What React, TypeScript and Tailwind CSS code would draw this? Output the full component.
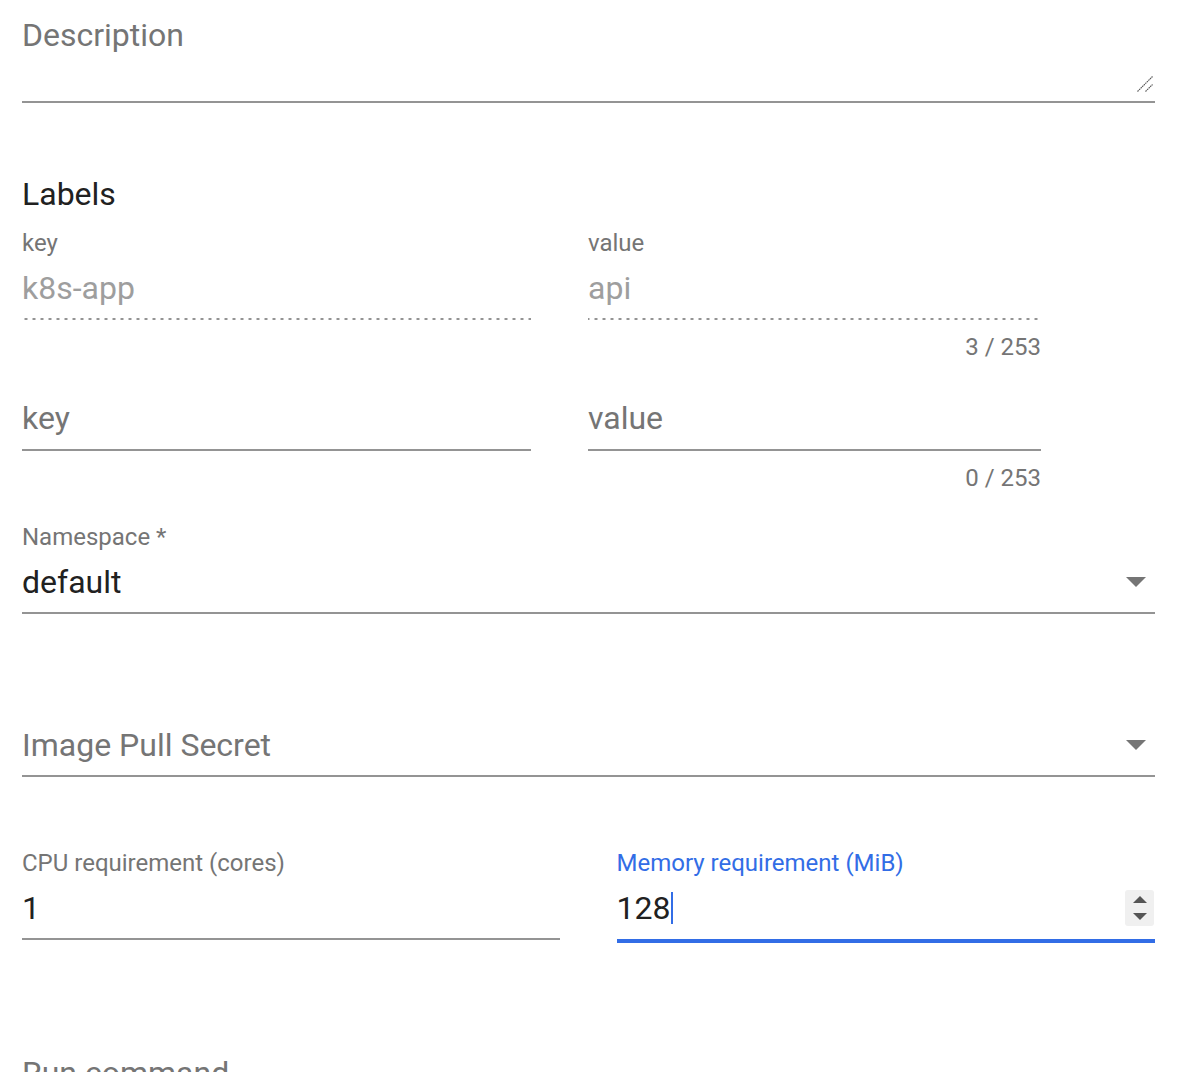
import React from "react";

const font = { fontFamily: "Roboto, 'Liberation Sans', sans-serif" };

function DropArrow() {
  return (
    <svg width="20" height="10" viewBox="0 0 20 10" className="mr-[9px] shrink-0">
      <polygon points="0,0 20,0 10,10" fill="#757575" />
    </svg>
  );
}

function Spinner() {
  return (
    <div className="flex h-[36px] w-[29px] shrink-0 flex-col items-center justify-center gap-[10px] rounded-[3px] bg-[#f0f0f0] mr-[1px]">
      <svg width="14" height="7" viewBox="0 0 14 7">
        <polygon points="7,0 14,7 0,7" fill="#555555" />
      </svg>
      <svg width="14" height="7" viewBox="0 0 14 7">
        <polygon points="0,0 14,0 7,7" fill="#555555" />
      </svg>
    </div>
  );
}

const dotted =
  "bg-[linear-gradient(to_right,#949494_0%,#949494_33%,transparent_0%)] bg-[length:8px_2px] bg-repeat-x bg-bottom";

export default function App() {
  return (
    <div className="min-h-[1072px] w-[1188px] overflow-hidden bg-white" style={font}>
      <div className="ml-[22px] w-[1133px]">
        {/* Description */}
        <div className="relative h-[103px] border-b-2 border-[#949494] pt-[17px]">
          <div className="h-[36px] text-[32px] leading-[36px] text-[#757575]">Description</div>
          <svg
            width="16"
            height="16"
            viewBox="0 0 16 16"
            className="absolute bottom-[9px] right-[2px]"
          >
            <line x1="0.5" y1="15.5" x2="15.5" y2="0.5" stroke="#555" strokeWidth="1.1" strokeDasharray="1.6 0.6" />
            <line x1="8.5" y1="15.5" x2="15.5" y2="8.5" stroke="#555" strokeWidth="1.1" strokeDasharray="1.6 0.6" />
          </svg>
        </div>

        {/* Labels heading */}
        <div className="mt-[73px] h-[36px] text-[32px] leading-[36px] text-[#212121]">Labels</div>

        {/* Existing label row */}
        <div className="mt-[19px] flex gap-[57px]">
          <div className="w-[509px]">
            <div className="h-[24px] text-[24px] leading-[24px] text-[#757575]">key</div>
            <div className={`mt-[15px] h-[50px] pb-[14px] ${dotted} pr-[3px]`}>
              <div className="h-[36px] text-[32px] leading-[36px] text-[#9e9e9e]">k8s-app</div>
            </div>
          </div>
          <div className="w-[453px]">
            <div className="h-[24px] text-[24px] leading-[24px] text-[#757575]">value</div>
            <div className={`mt-[15px] h-[50px] pb-[14px] ${dotted}`}>
              <div className="h-[36px] text-[32px] leading-[36px] text-[#9e9e9e]">api</div>
            </div>
            <div className="mt-[15px] h-[24px] text-right text-[24px] leading-[24px] text-[#757575]">3 / 253</div>
          </div>
        </div>

        {/* New label row */}
        <div className="mt-[41px] flex gap-[57px]">
          <div className="w-[509px]">
            <div className="h-[51px] border-b-2 border-[#949494] pb-[13px]">
              <div className="h-[36px] text-[32px] leading-[36px] text-[#757575]">key</div>
            </div>
          </div>
          <div className="w-[453px]">
            <div className="h-[51px] border-b-2 border-[#949494] pb-[13px]">
              <div className="h-[36px] text-[32px] leading-[36px] text-[#757575]">value</div>
            </div>
            <div className="mt-[15px] h-[24px] text-right text-[24px] leading-[24px] text-[#757575]">0 / 253</div>
          </div>
        </div>

        {/* Namespace */}
        <div className="mt-[35px]">
          <div className="h-[24px] text-[24px] leading-[24px] text-[#757575]">Namespace *</div>
          <div className="mt-[15px] flex h-[50px] items-start border-b-2 border-[#949494]">
            <div className="flex h-[36px] flex-1 items-center justify-between">
              <span className="text-[32px] leading-[36px] text-[#212121]">default</span>
              <DropArrow />
            </div>
          </div>
        </div>

        {/* Image Pull Secret */}
        <div className="mt-[113px] flex h-[50px] items-start border-b-2 border-[#949494]">
          <div className="flex h-[36px] flex-1 items-center justify-between">
            <span className="text-[32px] leading-[36px] text-[#757575]">Image Pull Secret</span>
            <DropArrow />
          </div>
        </div>

        {/* CPU / Memory */}
        <div className="mt-[74px] grid grid-cols-2 items-start gap-[58px]">
          <div>
            <div className="h-[24px] text-[24px] leading-[24px] text-[#757575]">CPU requirement (cores)</div>
            <div className="mt-[15px] h-[50px] border-b-2 border-[#949494]">
              <div className="h-[36px] text-[32px] leading-[36px] text-[#212121]">1</div>
            </div>
          </div>
          <div className="-ml-[1px]">
            <div className="h-[24px] text-[24px] leading-[24px] text-[#326de6]">Memory requirement (MiB)</div>
            <div className="mt-[15px] flex h-[53px] items-start border-b-[4px] border-[#326de6]">
              <div className="flex h-[36px] flex-1 items-center justify-between">
                <span className="flex items-center text-[32px] leading-[36px] text-[#212121]">
                  128
                  <span className="ml-[1px] inline-block h-[32px] w-[2px] bg-[#326de6]" />
                </span>
                <Spinner />
              </div>
            </div>
          </div>
        </div>

        {/* Run command */}
        <div className="mt-[112px] h-[36px] text-[32px] leading-[36px] text-[#757575]">Run command</div>
      </div>
    </div>
  );
}
